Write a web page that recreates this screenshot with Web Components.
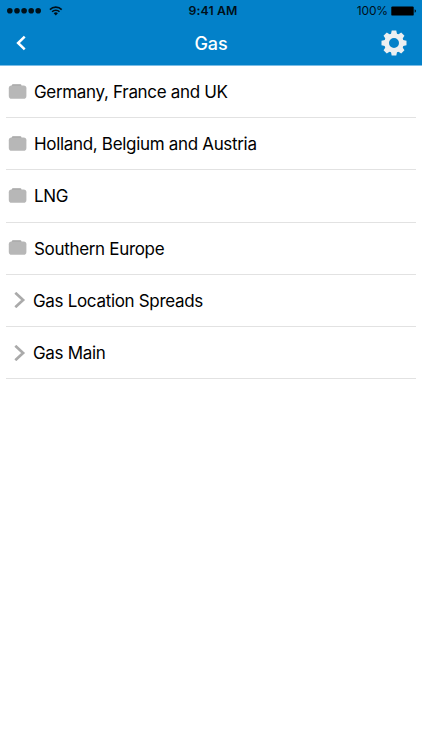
<!DOCTYPE html>
<html lang="en">
<head>
<meta charset="utf-8">
<title>Gas</title>
<style>
html,body{margin:0;height:100%;background:#fff}
body{font-family:Inter,"Liberation Sans",sans-serif;overflow:hidden}
</style>
</head>
<body>
<gas-screen></gas-screen>
<script>
const define = (name, markup) => customElements.define(name, class extends HTMLElement {
  constructor() {
    super();
    this.attachShadow({mode: 'open'}).innerHTML = markup;
  }
});

define('status-bar', `
<style>
:host{display:grid;grid-template-columns:1fr auto 1fr;align-items:center;height:22px;color:#001019;font-size:12.3px;line-height:22px}
.left,.right{display:flex;align-items:center;height:22px}
.left{padding-left:7px;gap:8px}
.left svg:last-child{margin-top:-1px}
.right{justify-content:flex-end;padding-right:5px;gap:3px}
.time{font-weight:600;letter-spacing:.15px;padding-left:4px}
.pct{font-size:12px;letter-spacing:-.15px}
svg{display:block}
</style>
<div class="left">
<svg width="34" height="8" viewBox="0 0 34 8"><g fill="#001019"><circle cx="2.8" cy="3.7" r="2.8"/><circle cx="10" cy="3.7" r="2.8"/><circle cx="17.1" cy="3.7" r="2.8"/><circle cx="24.2" cy="3.7" r="2.8"/><circle cx="31.2" cy="3.7" r="2.8"/></g></svg>
<svg width="14" height="10" viewBox="0 0 14 10"><g fill="none" stroke="#001019" stroke-width="1.6"><path d="M.9 3.6a8.3 8.3 0 0 1 11.8 0"/><path d="M3.1 5.8a5.2 5.2 0 0 1 7.4 0"/></g><path d="M4.7 7.3a3 3 0 0 1 4.2 0L6.8 9.5z" fill="#001019"/></svg>
</div>
<div class="time">9:41 AM</div>
<div class="right"><span class="pct">100%</span>
<svg width="26" height="10" viewBox="0 0 26 10"><rect x=".3" y=".4" width="22.4" height="9.2" rx="1.2" fill="#000"/><path d="M23.7 3.3c1.6.4 1.6 3 0 3.4z" fill="#000"/></svg></div>`);

define('nav-bar', `
<style>
:host{display:grid;grid-template-columns:1fr auto 1fr;align-items:center;height:43px;color:#fff}
.title{font-size:18px;font-weight:500;letter-spacing:-.1px;line-height:43px}
.back{padding-left:16px;margin-top:-1px}
.gear{justify-self:end;padding-right:15px;margin-top:-1px}
svg{display:block}
</style>
<div class="back"><svg width="11" height="16" viewBox="0 0 11 16"><path d="M8.7 1.6L2.1 8l6.6 6.4" fill="none" stroke="#fff" stroke-width="2.5"/></svg></div>
<div class="title"><slot></slot></div>
<div class="gear"><svg width="26" height="26" viewBox="-13 -13 26 26"><g fill="#eceff1"><path d="M-3.2-8L-2.3-12.5H2.3L3.2-8z"/><path d="M-3.2-8L-2.3-12.5H2.3L3.2-8z" transform="rotate(45)"/><path d="M-3.2-8L-2.3-12.5H2.3L3.2-8z" transform="rotate(90)"/><path d="M-3.2-8L-2.3-12.5H2.3L3.2-8z" transform="rotate(135)"/><path d="M-3.2-8L-2.3-12.5H2.3L3.2-8z" transform="rotate(180)"/><path d="M-3.2-8L-2.3-12.5H2.3L3.2-8z" transform="rotate(225)"/><path d="M-3.2-8L-2.3-12.5H2.3L3.2-8z" transform="rotate(270)"/><path d="M-3.2-8L-2.3-12.5H2.3L3.2-8z" transform="rotate(315)"/></g><circle r="7.4" fill="none" stroke="#eceff1" stroke-width="4.8"/></svg></div>`);

define('folder-icon', `
<style>:host,svg{display:block}</style>
<svg width="20" height="16" viewBox="0 0 20 16"><path d="M3.8 3V1.6Q3.8.3 5 .3h7.2Q13.4.3 13.4 1.6V3z" fill="#a3a3a3"/><rect x=".8" y="1.5" width="17.6" height="13.2" rx="2.8" fill="#b7b7b7"/></svg>`);

define('chevron-icon', `
<style>:host,svg{display:block}</style>
<svg width="12" height="16" viewBox="0 0 12 16"><path d="M1.3 .8l7.8 7.2-7.8 7.2" fill="none" stroke="#aaa" stroke-width="2.7"/></svg>`);

define('list-row', `
<style>
:host{display:flex;align-items:center;box-sizing:border-box;height:52.2px;margin:0 6px;border-bottom:1px solid #e2e2e2;color:#000;font-size:17px;letter-spacing:-.32px;white-space:nowrap}
.icon{display:flex;width:28px;box-sizing:border-box;padding-left:2px}
.label{padding-top:1px}
:host([kind=item]) .icon{width:27px;padding-left:8px}
</style>
<div class="icon"><slot name="icon"></slot></div><span class="label"><slot></slot></span>`);

define('gas-screen', `
<style>
:host{display:block}
header{background:#0381c9;height:65px;border-bottom:1px solid #7bbde6}
main{display:block}
</style>
<header><status-bar></status-bar><nav-bar>Gas</nav-bar></header>
<main>
<list-row><folder-icon slot="icon"></folder-icon>Germany, France and UK</list-row>
<list-row><folder-icon slot="icon"></folder-icon>Holland, Belgium and Austria</list-row>
<list-row><folder-icon slot="icon"></folder-icon>LNG</list-row>
<list-row><folder-icon slot="icon"></folder-icon>Southern Europe</list-row>
<list-row kind="item"><chevron-icon slot="icon"></chevron-icon>Gas Location Spreads</list-row>
<list-row kind="item"><chevron-icon slot="icon"></chevron-icon>Gas Main</list-row>
</main>`);
</script>
</body>
</html>
